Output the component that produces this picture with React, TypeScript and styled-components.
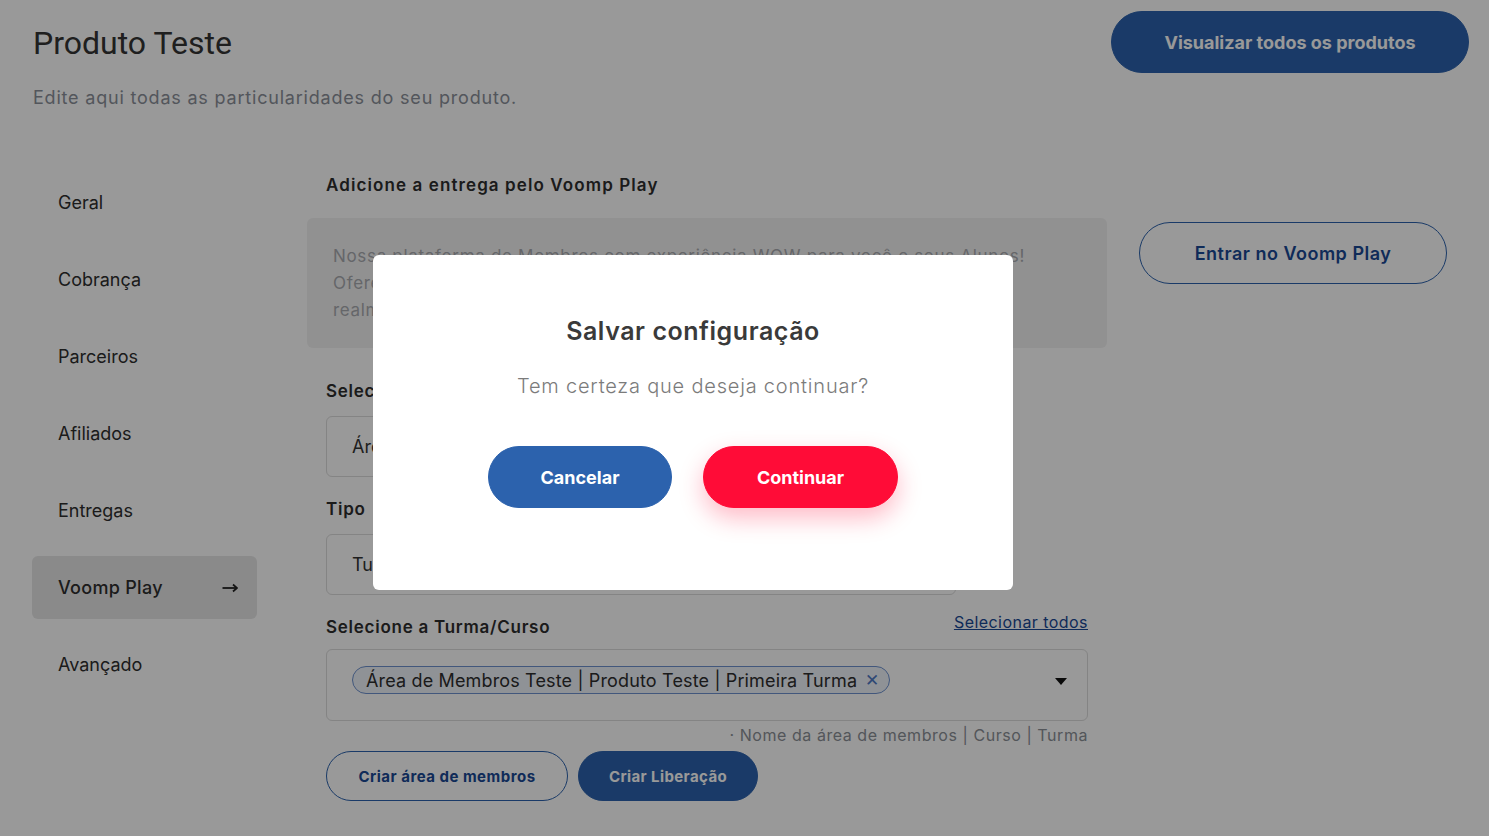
import React from "react";
import styled, { createGlobalStyle } from "styled-components";

const FONT = `"Inter", "Open Sans", "Liberation Sans", sans-serif`;

const Global = createGlobalStyle`
  html, body { margin: 0; padding: 0; background: #ffffff; }
  body { font-family: ${FONT}; color: #333; width: 1489px; height: 836px; overflow: hidden; }
  * { box-sizing: border-box; }
`;

const Page = styled.div`
  width: 1489px;
  height: 836px;
  position: relative;
  background: #fff;
`;

const Header = styled.header`
  display: flex;
  justify-content: space-between;
  align-items: flex-start;
  padding: 11px 20px 0 33px;
`;

const HeaderText = styled.div`
  display: flex;
  flex-direction: column;
  padding-top: 14px;
`;

const Title = styled.h1`
  margin: 0;
  font-family: Roboto, "Liberation Sans", sans-serif;
  font-weight: 400;
  font-size: 32px;
  line-height: 36px;
  color: #343434;
`;

const Subtitle = styled.p`
  margin: 26px 0 0;
  font-size: 18px;
  font-weight: 400;
  color: #8b9099;
  letter-spacing: 0.8px;
`;

const PillButton = styled.button<{
  $variant: "solid" | "outline" | "red";
  $h: number;
  $w: number;
  $fs?: number;
  $weight?: number;
  $ls?: number;
}>`
  height: ${(p) => p.$h}px;
  width: ${(p) => p.$w}px;
  border-radius: ${(p) => p.$h / 2}px;
  font-family: ${FONT};
  font-size: ${(p) => p.$fs ?? 18}px;
  font-weight: ${(p) => p.$weight ?? 700};
  letter-spacing: ${(p) => p.$ls ?? 0}px;
  cursor: pointer;
  display: inline-flex;
  align-items: center;
  justify-content: center;
  border: 1px solid ${(p) => (p.$variant === "red" ? "#ff0c37" : "#2c62ad")};
  background: ${(p) =>
    p.$variant === "solid" ? "#2c62ad" : p.$variant === "red" ? "#ff0c37" : "transparent"};
  color: ${(p) => (p.$variant === "outline" ? "#194894" : "#ffffff")};
  box-shadow: ${(p) => (p.$variant === "red" ? "0 10px 24px rgba(255, 12, 55, 0.28)" : "none")};
  flex-shrink: 0;
`;

const Body = styled.div`
  display: flex;
  padding: 63px 0 0 32px;
`;

const Sidebar = styled.nav`
  width: 225px;
  display: flex;
  flex-direction: column;
  gap: 14px;
`;

const NavItem = styled.div<{ $active?: boolean }>`
  height: 63px;
  display: flex;
  align-items: center;
  justify-content: space-between;
  padding: 0 19px 0 26px;
  border-radius: 6px;
  font-size: 18px;
  color: #2e2e2e;
  font-weight: ${(p) => (p.$active ? 500 : 400)};
  letter-spacing: ${(p) => (p.$active ? 0.3 : 0)}px;
  background: ${(p) => (p.$active ? "#e6e6e6" : "transparent")};
`;

const ArrowIcon = () => (
  <svg width="16" height="10" viewBox="0 0 16 10" fill="none">
    <path d="M0.5 5H15" stroke="#222" strokeWidth="1.8" />
    <path d="M11 1.5L15 5L11 8.5" stroke="#222" strokeWidth="1.8" fill="none" />
  </svg>
);

const Main = styled.main`
  width: 800px;
  margin-left: 50px;
  display: flex;
  flex-direction: column;
`;

const SectionTitle = styled.h2`
  margin: 0 0 0 19px;
  padding-top: 2px;
  font-size: 17px;
  font-weight: 600;
  color: #2e2e2e;
  line-height: 24px;
  letter-spacing: 1.1px;
`;

const InfoBox = styled.div`
  margin-top: 21px;
  background: #f2f2f2;
  border-radius: 6px;
  padding: 25px 26px 16px 26px;
  font-size: 17px;
  line-height: 27px;
  color: #a9abb0;
  height: 130px;
  letter-spacing: 0.68px;
`;

const Form = styled.div`
  padding: 0 19px;
  display: flex;
  flex-direction: column;
`;

const LabelRow = styled.div<{ $mt: number }>`
  display: flex;
  justify-content: space-between;
  align-items: flex-start;
  margin-top: ${(p) => p.$mt}px;
`;

const Label = styled.label`
  font-size: 17px;
  font-weight: 600;
  color: #2e2e2e;
  line-height: 24px;
  letter-spacing: 0.74px;
`;

const LinkText = styled.a`
  font-size: 16px;
  color: #194894;
  text-decoration: underline;
  line-height: 14px;
  letter-spacing: 0.45px;
`;

const SelectBox = styled.div<{ $w?: number; $h: number; $mt?: number }>`
  margin-top: ${(p) => p.$mt ?? 13}px;
  width: ${(p) => (p.$w ? `${p.$w}px` : "100%")};
  height: ${(p) => p.$h}px;
  border: 1px solid #dcdcdc;
  border-radius: 6px;
  display: flex;
  align-items: center;
  padding: 0 25px;
  font-size: 18px;
  color: #333;
`;

const MultiBox = styled(SelectBox)`
  align-items: flex-start;
  padding: 16px 20px 0 25px;
  justify-content: space-between;
`;

const Chip = styled.span`
  display: inline-flex;
  align-items: center;
  gap: 8px;
  height: 28px;
  padding: 0 10px 0 13px;
  border: 1px solid #6e92cf;
  border-radius: 14px;
  background: #eef3fb;
  font-size: 18px;
  color: #2e2e2e;
  letter-spacing: 0.15px;
`;

const ChipX = styled.span`
  color: #4f79c4;
  font-size: 17px;
  line-height: 1;
`;

const Caret = styled.span`
  margin-top: 12px;
  width: 0;
  height: 0;
  border-left: 6px solid transparent;
  border-right: 6px solid transparent;
  border-top: 7px solid #111;
`;

const Helper = styled.div`
  margin-top: 4px;
  text-align: right;
  font-size: 16px;
  color: #8b8f96;
  line-height: 20px;
  letter-spacing: 0.55px;
`;

const ButtonRow = styled.div`
  display: flex;
  gap: 10px;
  margin-top: 6px;
`;

const RightCol = styled.div`
  margin-left: 32px;
  padding-top: 51px;
`;

const Overlay = styled.div`
  position: fixed;
  inset: 0;
  background: rgba(0, 0, 0, 0.4);
`;

const Modal = styled.div`
  position: fixed;
  left: 373px;
  top: 255px;
  width: 640px;
  height: 335px;
  background: #fff;
  border-radius: 6px;
  display: flex;
  flex-direction: column;
  align-items: center;
  padding-top: 60px;
`;

const ModalTitle = styled.h3`
  margin: 0;
  font-size: 25px;
  font-weight: 600;
  color: #3a3a3a;
  line-height: 32px;
  letter-spacing: 0.55px;
`;

const ModalText = styled.p`
  margin: 26px 0 0;
  font-size: 20px;
  font-weight: 300;
  color: #7b7b7b;
  line-height: 26px;
  letter-spacing: 0.8px;
`;

const ModalActions = styled.div`
  display: flex;
  gap: 31px;
  margin-top: 47px;
`;

export default function App() {
  return (
    <Page>
      <Global />
      <Header>
        <HeaderText>
          <Title>Produto Teste</Title>
          <Subtitle>Edite aqui todas as particularidades do seu produto.</Subtitle>
        </HeaderText>
        <PillButton $variant="solid" $h={62} $w={358}>
          Visualizar todos os produtos
        </PillButton>
      </Header>
      <Body>
        <Sidebar>
          <NavItem>Geral</NavItem>
          <NavItem>Cobrança</NavItem>
          <NavItem>Parceiros</NavItem>
          <NavItem>Afiliados</NavItem>
          <NavItem>Entregas</NavItem>
          <NavItem $active>
            Voomp Play <ArrowIcon />
          </NavItem>
          <NavItem>Avançado</NavItem>
        </Sidebar>
        <Main>
          <SectionTitle>Adicione a entrega pelo Voomp Play</SectionTitle>
          <InfoBox>
            Nossa plataforma de Membros com experiência WOW para você e seus Alunos!
            <br />
            Ofereça uma área de membros completa, moderna e intuitiva para quem
            <br />
            realmente importa: os seus clientes.
          </InfoBox>
          <Form>
            <LabelRow $mt={31}>
              <Label>Selecione a Área de Membros</Label>
            </LabelRow>
            <SelectBox $w={630} $h={61}>Área de Membros Teste</SelectBox>
            <LabelRow $mt={20}>
              <Label>Tipo</Label>
            </LabelRow>
            <SelectBox $w={630} $h={61}>Turma</SelectBox>
            <LabelRow $mt={20}>
              <Label>Selecione a Turma/Curso</Label>
              <LinkText>Selecionar todos</LinkText>
            </LabelRow>
            <MultiBox $h={72} $mt={10}>
              <Chip>
                Área de Membros Teste | Produto Teste | Primeira Turma <ChipX>✕</ChipX>
              </Chip>
              <Caret />
            </MultiBox>
            <Helper>· Nome da área de membros | Curso | Turma</Helper>
            <ButtonRow>
              <PillButton $variant="outline" $h={50} $w={242} $fs={15} $ls={0.5}>
                Criar área de membros
              </PillButton>
              <PillButton $variant="solid" $h={50} $w={180} $fs={15} $ls={0.4}>
                Criar Liberação
              </PillButton>
            </ButtonRow>
          </Form>
        </Main>
        <RightCol>
          <PillButton $variant="outline" $h={62} $w={308} $weight={600} $ls={0.5}>
            Entrar no Voomp Play
          </PillButton>
        </RightCol>
      </Body>
      <Overlay />
      <Modal>
        <ModalTitle>Salvar configuração</ModalTitle>
        <ModalText>Tem certeza que deseja continuar?</ModalText>
        <ModalActions>
          <PillButton $variant="solid" $h={62} $w={184}>
            Cancelar
          </PillButton>
          <PillButton $variant="red" $h={62} $w={195}>
            Continuar
          </PillButton>
        </ModalActions>
      </Modal>
    </Page>
  );
}
